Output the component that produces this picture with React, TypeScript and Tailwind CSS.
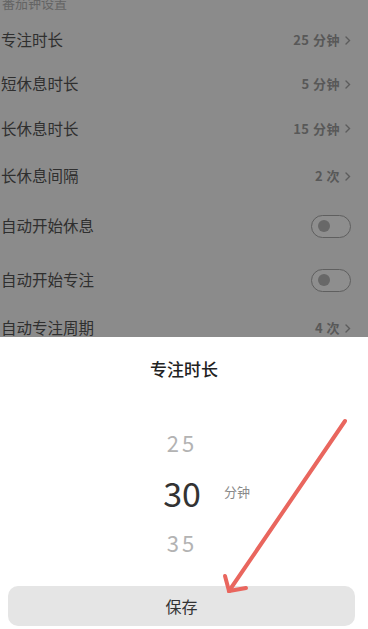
const rows = [
  { label: '专注时长', value: '25 分钟', h: 'h-[44px]' },
  { label: '短休息时长', value: '5 分钟', h: 'h-[44px]' },
  { label: '长休息时长', value: '15 分钟', h: 'h-[45px]' },
  { label: '长休息间隔', value: '2 次', h: 'h-[50px]' },
  { label: '自动开始休息', toggle: true, h: 'h-[50px]' },
  { label: '自动开始专注', toggle: true, h: 'h-[58px]' },
  { label: '自动专注周期', value: '4 次', h: 'h-[38px]' },
];

function Chevron() {
  return (
    <svg width="6" height="9" viewBox="0 0 6 9" className="ml-[5px]">
      <path d="M1 1 L4.5 4.5 L1 8" fill="none" stroke="#5c5c5c" strokeWidth="1.4" strokeLinecap="round" />
    </svg>
  );
}

function Toggle() {
  return (
    <div className="w-[40px] h-[23px] rounded-full border-[1.5px] border-[#5f5f5f] bg-[#8e8e8e] flex items-center pl-[6px]">
      <div className="w-[12px] h-[12px] rounded-full bg-[#686868]" />
    </div>
  );
}

export default function App() {
  return (
    <div className="relative w-[368px] h-[629px] overflow-hidden bg-[#8b8b8b] font-['Noto_Sans_CJK_SC',sans-serif]">
      {/* dimmed settings page */}
      <div className="h-[337px] flex flex-col overflow-hidden">
        <div className="h-[24px] shrink-0 -mt-[6px] pl-[2px] text-[13px] leading-[18px] text-[#646464]">番茄钟设置</div>
        {rows.map((r) => (
          <div key={r.label} className={`${r.h} shrink-0 flex items-center justify-between pl-[1px] pr-[17px]`}>
            <span className="text-[15.5px] text-[#2f2f2f]">{r.label}</span>
            {r.toggle ? (
              <Toggle />
            ) : (
              <span className="flex items-center text-[13px] font-bold text-[#585858] tracking-[0.5px]">
                {r.value}
                <Chevron />
              </span>
            )}
          </div>
        ))}
      </div>

      {/* bottom sheet */}
      <div className="h-[292px] bg-white flex flex-col">
        <div className="h-[64px] flex items-center justify-center text-[17px] font-medium text-[#222]">专注时长</div>
        <div className="mt-[16px] flex flex-col">
          <div className="h-[50px] flex items-center pl-[152px]">
            <span className="w-[60px] text-center text-[22px] text-[#b3b3b3] tracking-[3px]">25</span>
          </div>
          <div className="h-[50px] flex items-center pl-[152px]">
            <span className="w-[60px] text-center text-[34px] text-[#333]">30</span>
            <span className="ml-[12px] text-[13px] text-[#8a8a8a]">分钟</span>
          </div>
          <div className="h-[50px] flex items-center pl-[152px]">
            <span className="w-[60px] text-center text-[22px] text-[#b3b3b3] tracking-[3px]">35</span>
          </div>
        </div>
        <button className="mt-[19px] ml-[8px] mr-[13px] h-[40px] rounded-[10px] bg-[#e5e5e5] text-[16px] text-[#333]">
          保存
        </button>
      </div>

      {/* annotation arrow */}
      <svg className="absolute inset-0 pointer-events-none" width="368" height="629">
        <g stroke="#e9665e" strokeWidth="4" strokeLinecap="round" fill="none">
          <line x1="345" y1="421" x2="229" y2="591" />
          <line x1="229" y1="591" x2="225" y2="576" />
          <line x1="229" y1="591" x2="246" y2="588" />
        </g>
      </svg>
    </div>
  );
}
